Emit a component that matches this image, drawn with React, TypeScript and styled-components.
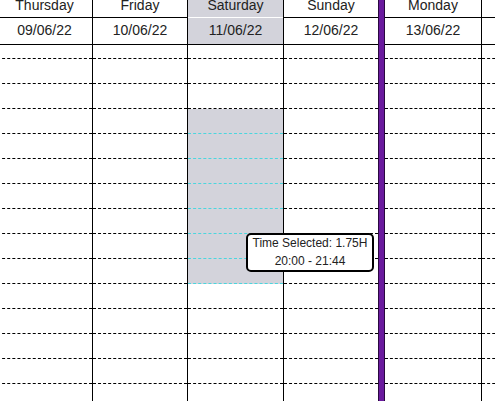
import React from "react";
import styled, { createGlobalStyle } from "styled-components";

const GlobalStyle = createGlobalStyle`
  html, body { margin: 0; padding: 0; background: #fff; overflow: hidden; }
  body { font-family: "Liberation Sans", Arial, sans-serif; }
`;

const GRAY = "#d3d3db";
const CYAN = "#4ad6de";

const Page = styled.div`
  position: relative;
  width: 495px;
  height: 401px;
  overflow: hidden;
  background: #fff;
`;

const Calendar = styled.div`
  display: flex;
  height: 100%;
  margin-left: -3px;
`;

const DayColumn = styled.div<{ $width: number; $border: boolean }>`
  flex: 0 0 ${(p) => p.$width}px;
  box-sizing: border-box;
  border-right: ${(p) => (p.$border ? "1px solid #000" : "none")};
  display: flex;
  flex-direction: column;
  min-width: 0;
`;

const NameCell = styled.div<{ $highlight?: boolean }>`
  height: 17px;
  line-height: 10px;
  border-bottom: 1px solid ${(p) => (p.$highlight ? "#fff" : "#000")};
  background: ${(p) => (p.$highlight ? GRAY : "#fff")};
  text-align: center;
  font-size: 14px;
  color: #222;
  overflow: hidden;
  white-space: nowrap;
`;

const DateCell = styled.div<{ $highlight?: boolean }>`
  height: 26px;
  line-height: 25px;
  border-bottom: 1px solid #000;
  background: ${(p) => (p.$highlight ? GRAY : "#fff")};
  text-align: center;
  font-size: 14px;
  color: #222;
  white-space: nowrap;
`;

const Body = styled.div`
  flex: 1;
  overflow: hidden;
`;

const SlotList = styled.div`
  display: flex;
  flex-direction: column;
  margin-top: -11px;
`;

const Slot = styled.div<{ $selected: boolean }>`
  height: 24px;
  flex: 0 0 auto;
  border-bottom: 1px dashed ${(p) => (p.$selected ? CYAN : "#000")};
  background: ${(p) => (p.$selected ? GRAY : "transparent")};
`;

const NowMarker = styled.div`
  flex: 0 0 7px;
  box-sizing: border-box;
  height: 100%;
  background: #6a1a9e;
  border-left: 1px solid #2a0840;
  border-right: 1px solid #2a0840;
`;

const Tooltip = styled.div`
  position: absolute;
  left: 246px;
  top: 233px;
  width: 128px;
  box-sizing: border-box;
  border: 2px solid #000;
  border-radius: 5px;
  background: #fff;
  padding: 0 4px;
  text-align: center;
  font-size: 12px;
  line-height: 17.5px;
  color: #222;
`;

type Day = { name: string; date: string; width: number; border: boolean; highlight?: boolean; selection?: [number, number] };

const days: Day[] = [
  { name: "Thursday", date: "09/06/22", width: 96, border: true },
  { name: "Friday", date: "10/06/22", width: 95, border: true },
  { name: "Saturday", date: "11/06/22", width: 96, border: true, highlight: true, selection: [3, 9] },
  { name: "Sunday", date: "12/06/22", width: 94, border: false },
  { name: "Monday", date: "13/06/22", width: 97, border: true },
  { name: "", date: "", width: 96, border: true },
];

const SLOT_COUNT = 16;

function Column({ day }: { day: Day }) {
  const slots = Array.from({ length: SLOT_COUNT }, (_, i) => i);
  return (
    <DayColumn $width={day.width} $border={day.border}>
      <NameCell $highlight={day.highlight}>{day.name}</NameCell>
      <DateCell $highlight={day.highlight}>{day.date}</DateCell>
      <Body>
        <SlotList>
          {slots.map((i) => (
            <Slot
              key={i}
              $selected={!!day.selection && i >= day.selection[0] && i <= day.selection[1]}
            />
          ))}
        </SlotList>
      </Body>
    </DayColumn>
  );
}

export default function App() {
  return (
    <Page>
      <GlobalStyle />
      <Calendar>
        {days.slice(0, 4).map((d) => (
          <Column key={d.date || "x"} day={d} />
        ))}
        <NowMarker />
        {days.slice(4).map((d) => (
          <Column key={d.date || "next"} day={d} />
        ))}
      </Calendar>
      <Tooltip>
        <div>Time Selected: 1.75H</div>
        <div>20:00 - 21:44</div>
      </Tooltip>
    </Page>
  );
}
